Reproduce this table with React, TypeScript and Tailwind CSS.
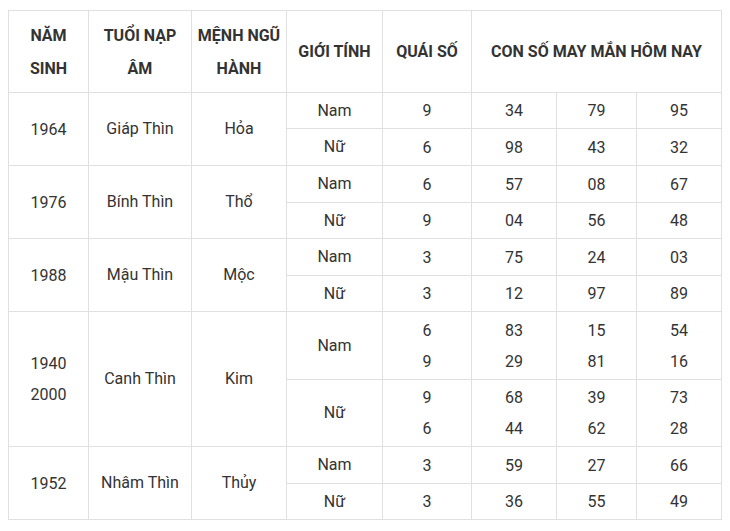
const rows = [
  {
    year: ["1964"],
    napAm: "Giáp Thìn",
    menh: "Hỏa",
    h: ["h-[36px]", "h-[37px]"],
    sub: [
      { gender: "Nam", quai: ["9"], nums: [["34"], ["79"], ["95"]] },
      { gender: "Nữ", quai: ["6"], nums: [["98"], ["43"], ["32"]] },
    ],
  },
  {
    year: ["1976"],
    napAm: "Bính Thìn",
    menh: "Thổ",
    h: ["h-[37px]", "h-[36px]"],
    sub: [
      { gender: "Nam", quai: ["6"], nums: [["57"], ["08"], ["67"]] },
      { gender: "Nữ", quai: ["9"], nums: [["04"], ["56"], ["48"]] },
    ],
  },
  {
    year: ["1988"],
    napAm: "Mậu Thìn",
    menh: "Mộc",
    h: ["h-[37px]", "h-[36px]"],
    sub: [
      { gender: "Nam", quai: ["3"], nums: [["75"], ["24"], ["03"]] },
      { gender: "Nữ", quai: ["3"], nums: [["12"], ["97"], ["89"]] },
    ],
  },
  {
    year: ["1940", "2000"],
    napAm: "Canh Thìn",
    menh: "Kim",
    h: ["h-[68px]", "h-[67px]"],
    sub: [
      { gender: "Nam", quai: ["6", "9"], nums: [["83", "29"], ["15", "81"], ["54", "16"]] },
      { gender: "Nữ", quai: ["9", "6"], nums: [["68", "44"], ["39", "62"], ["73", "28"]] },
    ],
  },
  {
    year: ["1952"],
    napAm: "Nhâm Thìn",
    menh: "Thủy",
    h: ["h-[37px]", "h-[36px]"],
    sub: [
      { gender: "Nam", quai: ["3"], nums: [["59"], ["27"], ["66"]] },
      { gender: "Nữ", quai: ["3"], nums: [["36"], ["55"], ["49"]] },
    ],
  },
];

const cell = "border border-[#e0e0e0] text-center align-middle p-0";

function Lines({ items }: { items: string[] }) {
  return (
    <>
      {items.map((t, i) => (
        <div key={i} className="leading-[31px]">
          {t}
        </div>
      ))}
    </>
  );
}

export default function App() {
  return (
    <div className="w-[730px] h-[531px] bg-white pl-2 pt-[10px] font-['Roboto',sans-serif] text-[16px] text-[#333]">
      <table className="border-collapse table-fixed w-[713px]">
        <colgroup>
          <col className="w-[80px]" />
          <col className="w-[103px]" />
          <col className="w-[95px]" />
          <col className="w-[96px]" />
          <col className="w-[89px]" />
          <col className="w-[85px]" />
          <col className="w-[80px]" />
          <col className="w-[85px]" />
        </colgroup>
        <thead>
          <tr className="h-[82px] font-bold leading-[33px]">
            <th className={cell}>
              NĂM
              <br />
              SINH
            </th>
            <th className={cell}>
              TUỔI NẠP
              <br />
              ÂM
            </th>
            <th className={cell}>
              MỆNH NGŨ
              <br />
              HÀNH
            </th>
            <th className={cell}>GIỚI TÍNH</th>
            <th className={cell}>QUÁI SỐ</th>
            <th className={cell} colSpan={3}>
              CON SỐ MAY MẮN HÔM NAY
            </th>
          </tr>
        </thead>
        <tbody>
          {rows.map((r) =>
            r.sub.map((s, i) => (
              <tr key={r.napAm + i} className={r.h[i]}>
                {i === 0 && (
                  <>
                    <td className={cell} rowSpan={2}>
                      <Lines items={r.year} />
                    </td>
                    <td className={cell} rowSpan={2}>
                      {r.napAm}
                    </td>
                    <td className={cell} rowSpan={2}>
                      {r.menh}
                    </td>
                  </>
                )}
                <td className={cell}>{s.gender}</td>
                <td className={cell}>
                  <Lines items={s.quai} />
                </td>
                {s.nums.map((n, j) => (
                  <td key={j} className={cell}>
                    <Lines items={n} />
                  </td>
                ))}
              </tr>
            ))
          )}
        </tbody>
      </table>
    </div>
  );
}
